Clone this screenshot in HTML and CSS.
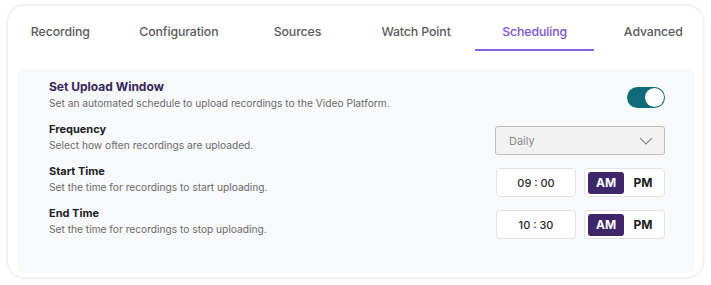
FILE: index.html
```html
<!DOCTYPE html>
<html>
<head>
<meta charset="utf-8">
<link rel="stylesheet" href="styles.css">
</head>
<body>
<div class="card">
  <nav class="tabs">
    <div class="tab">Recording</div>
    <div class="tab">Configuration</div>
    <div class="tab">Sources</div>
    <div class="tab">Watch Point</div>
    <div class="tab active">Scheduling</div>
    <div class="tab">Advanced</div>
  </nav>
  <section class="panel">
    <div class="row">
      <div class="text">
        <div class="title main">Set Upload Window</div>
        <div class="desc">Set an automated schedule to upload recordings to the Video Platform.</div>
      </div>
      <div class="toggle"><span class="knob"></span></div>
    </div>
    <div class="row">
      <div class="text">
        <div class="title">Frequency</div>
        <div class="desc">Select how often recordings are uploaded.</div>
      </div>
      <div class="select">
        <span>Daily</span>
        <svg width="14" height="8" viewBox="0 0 14 8"><path d="M1 1 L7 7 L13 1" fill="none" stroke="#8a8a8a" stroke-width="1.1"/></svg>
      </div>
    </div>
    <div class="row">
      <div class="text">
        <div class="title">Start Time</div>
        <div class="desc">Set the time for recordings to start uploading.</div>
      </div>
      <div class="controls">
        <div class="time">09 : 00</div>
        <div class="ampm"><span class="opt on">AM</span><span class="opt">PM</span></div>
      </div>
    </div>
    <div class="row">
      <div class="text">
        <div class="title">End Time</div>
        <div class="desc">Set the time for recordings to stop uploading.</div>
      </div>
      <div class="controls">
        <div class="time">10 : 30</div>
        <div class="ampm"><span class="opt on">AM</span><span class="opt">PM</span></div>
      </div>
    </div>
  </section>
</div>
</body>
</html>
```

FILE: styles.css
```css
* { box-sizing: border-box; }
html, body { margin: 0; padding: 0; background: #ffffff; }
body {
  font-family: Inter, "Noto Sans", "Liberation Sans", sans-serif;
  padding: 6px 8px;
}
.card {
  width: 695px;
  height: 271px;
  background: #ffffff;
  border-radius: 16px;
  box-shadow: 0 0 3px 1px rgba(0, 0, 0, 0.10);
  overflow: hidden;
  display: flex;
  flex-direction: column;
}
.tabs {
  display: flex;
  margin-left: -7px;
  height: 45px;
  flex: none;
}
.tab {
  width: 118.6px;
  flex: none;
  text-align: center;
  padding-top: 18px;
  font-size: 12.3px;
  line-height: 16px;
  font-weight: 500;
  color: #5b5b5b;
  letter-spacing: -0.1px;
}
.tab.active {
  color: #7d52cf;
  border-bottom: 2px solid #8a60dc;
}
.panel {
  margin: 18px 8px 4px 9px;
  flex: 1;
  background: #f8f9fb;
  border-radius: 8px;
  padding: 10px 30px 0 32px;
  display: flex;
  flex-direction: column;
}
.row {
  height: 42px;
  display: flex;
  justify-content: space-between;
  align-items: flex-start;
}
.title {
  font-size: 11px;
  line-height: 16px;
  font-weight: 700;
  color: #1e1e24;
}
.title.main {
  font-size: 12px;
  color: #35265a;
}
.desc {
  font-size: 10.2px;
  line-height: 17px;
  color: #6a6a6a;
}
.toggle {
  margin-top: 8px;
  width: 38px;
  height: 21px;
  border-radius: 11px;
  background: #0f6b79;
  position: relative;
}
.knob {
  position: absolute;
  right: 1px;
  top: 1px;
  width: 19px;
  height: 19px;
  border-radius: 50%;
  background: #ffffff;
  box-shadow: 0 0 1px rgba(0,0,0,0.3);
}
.select {
  margin-top: 5px;
  width: 170px;
  height: 29px;
  background: #f2f2f2;
  border: 1px solid #bdbdbd;
  border-radius: 3px;
  display: flex;
  align-items: center;
  justify-content: space-between;
  padding: 0 11px 0 13px;
  font-size: 11px;
  color: #8a8a8a;
}
.controls {
  margin-top: 5px;
  display: flex;
  gap: 8px;
}
.time {
  width: 80px;
  height: 29px;
  background: #ffffff;
  border: 1px solid #e3e3e3;
  border-radius: 4px;
  display: flex;
  align-items: center;
  justify-content: center;
  font-size: 11px;
  font-weight: 500;
  color: #2a2a2a;
}
.ampm {
  width: 81px;
  height: 29px;
  background: #ffffff;
  border: 1px solid #e3e3e3;
  border-radius: 4px;
  display: flex;
  align-items: center;
  padding: 0 3px;
}
.opt {
  width: 36px;
  height: 22px;
  display: flex;
  align-items: center;
  justify-content: center;
  font-size: 12px;
  font-weight: 700;
  color: #1e1e24;
  border-radius: 3px;
}
.opt + .opt { margin-left: 1px; }
.opt.on {
  background: #3d2769;
  color: #ffffff;
}
```
